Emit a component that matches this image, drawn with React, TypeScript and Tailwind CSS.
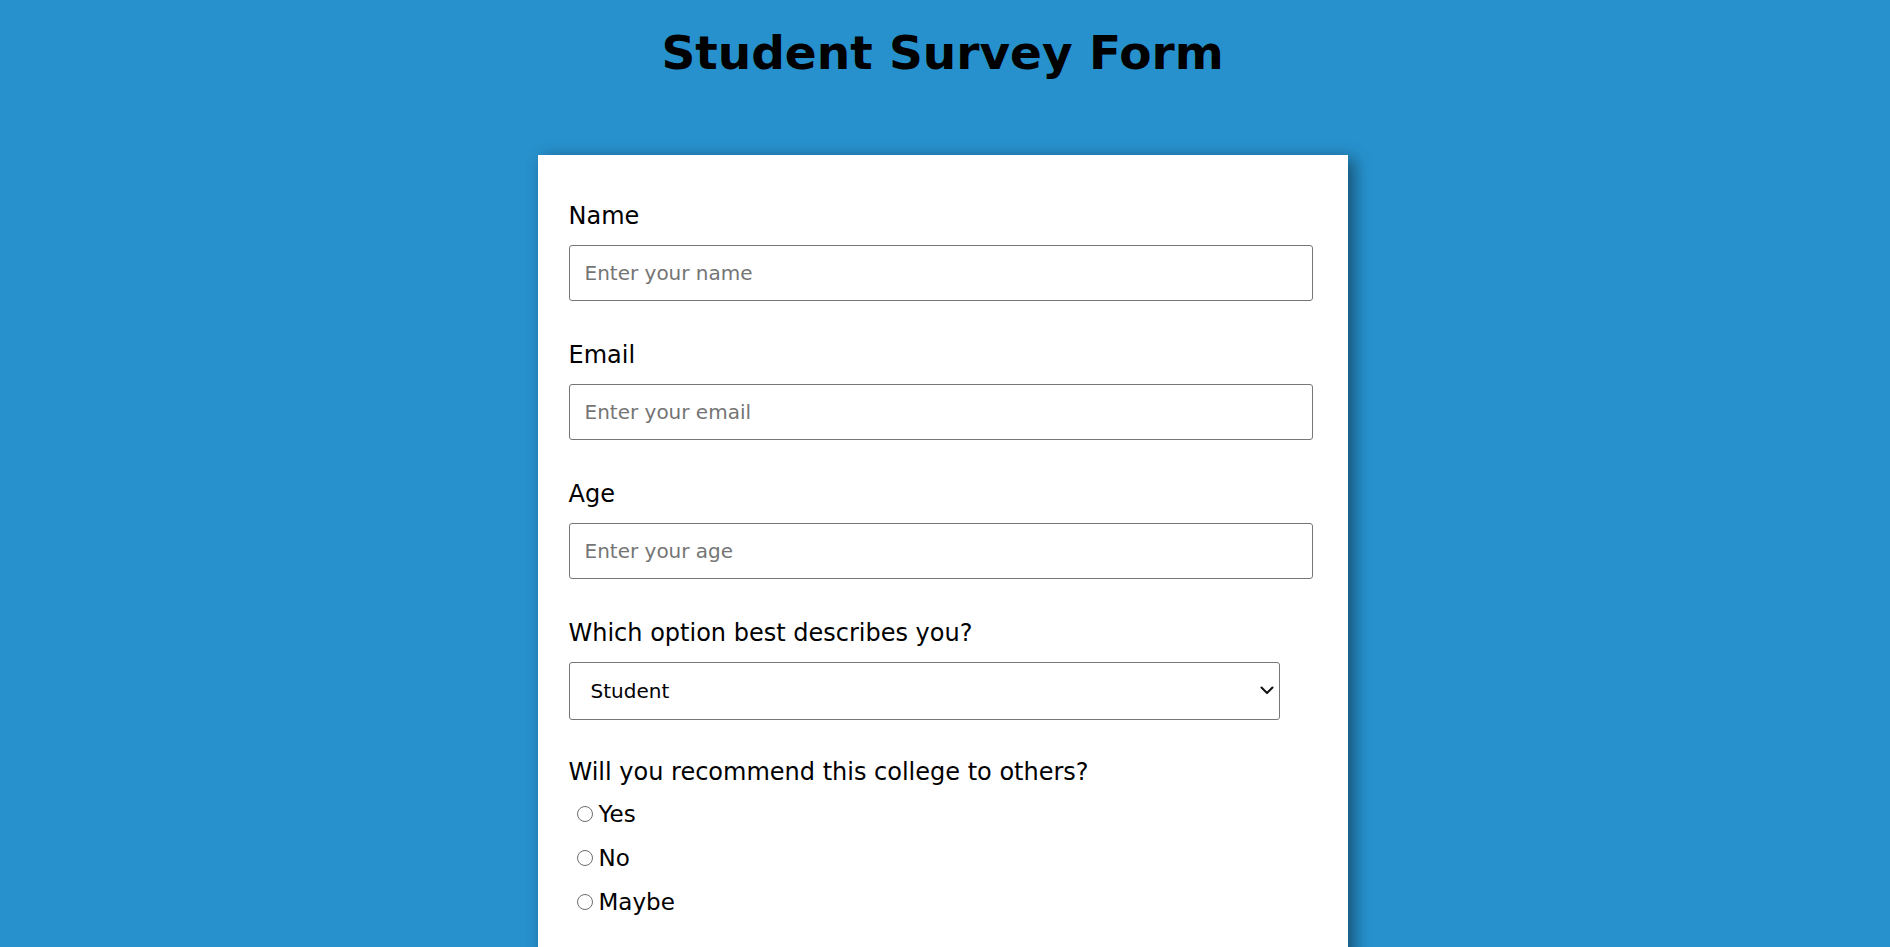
import React from "react";

function Field({ label, placeholder, type = "text" }: { label: string; placeholder: string; type?: string }) {
  return (
    <div className="mb-[41px]">
      <label className="block text-[24px] leading-[27px] mb-[15px] text-black">{label}</label>
      <input
        type={type}
        placeholder={placeholder}
        className="block w-[744px] h-[56px] border border-[#767676] rounded-[3px] pl-[15px] text-[20px] text-black placeholder:text-[#757575] bg-white outline-none"
      />
    </div>
  );
}

function Radio({ label }: { label: string }) {
  return (
    <label className="flex items-center h-[44px] text-[23px] text-black">
      <input
        type="radio"
        name="recommend"
        className="appearance-none shrink-0 w-[16px] h-[16px] rounded-full border border-[#6e6e6e] bg-white ml-[8px] mr-[6px] checked:bg-[#2791cd]"
      />
      <span>{label}</span>
    </label>
  );
}

export default function App() {
  return (
    <div className="min-h-screen bg-[#2791cd] font-['DejaVu_Sans',Verdana,sans-serif] pr-[5px]">
      <h1 className="text-center font-bold text-[47px] leading-[55px] pt-[25px] text-black">Student Survey Form</h1>
      <form className="w-[810px] mx-auto mt-[75px] bg-white pt-[48px] pl-[31px] pr-[35px] pb-[40px] shadow-[6px_4px_16px_rgba(0,0,0,0.45)]">
        <Field label="Name" placeholder="Enter your name" />
        <Field label="Email" placeholder="Enter your email" type="email" />
        <Field label="Age" placeholder="Enter your age" type="number" />
        <div className="mb-[39px]">
          <label className="block text-[24px] leading-[27px] mb-[15px] text-black">Which option best describes you?</label>
          <div className="relative w-[711px]">
            <select className="block appearance-none w-[711px] h-[58px] border border-[#767676] rounded-[3px] pl-[21px] text-[20px] text-black bg-white outline-none">
              <option>Student</option>
              <option>Full Time Job</option>
              <option>Prefer not to say</option>
              <option>Other</option>
            </select>
            <svg
              className="absolute right-[6px] top-[24px] pointer-events-none"
              width="14"
              height="9"
              viewBox="0 0 14 9"
              fill="none"
            >
              <path d="M1.5 1.5 L7 7 L12.5 1.5" stroke="#111" strokeWidth="2" strokeLinecap="round" strokeLinejoin="round" />
            </svg>
          </div>
        </div>
        <div className="mb-[80px]">
          <p className="text-[24px] leading-[27px] text-black mb-[6px]">Will you recommend this college to others?</p>
          <Radio label="Yes" />
          <Radio label="No" />
          <Radio label="Maybe" />
        </div>
        <div className="mb-[40px]">
          <p className="text-[24px] leading-[27px] text-black mb-[10px]">What would you like to see improved?</p>
          {["Front-end Projects", "Back-end Projects", "Data Visualization", "Challenges"].map((c) => (
            <label key={c} className="flex items-center h-[44px] text-[23px] text-black">
              <input type="checkbox" className="w-[15px] h-[15px] ml-[8px] mr-[8px]" />
              <span>{c}</span>
            </label>
          ))}
        </div>
        <div className="mb-[40px]">
          <label className="block text-[24px] leading-[27px] mb-[15px] text-black">Any comments or suggestions?</label>
          <textarea
            placeholder="Enter your comment here..."
            className="block w-[744px] h-[120px] border border-[#767676] rounded-[3px] p-[15px] text-[20px] placeholder:text-[#757575]"
          />
        </div>
        <button type="button" className="w-[744px] h-[56px] bg-[#2791cd] text-white text-[22px] rounded-[3px]">Submit</button>
      </form>
      <div className="h-[40px]" />
    </div>
  );
}
